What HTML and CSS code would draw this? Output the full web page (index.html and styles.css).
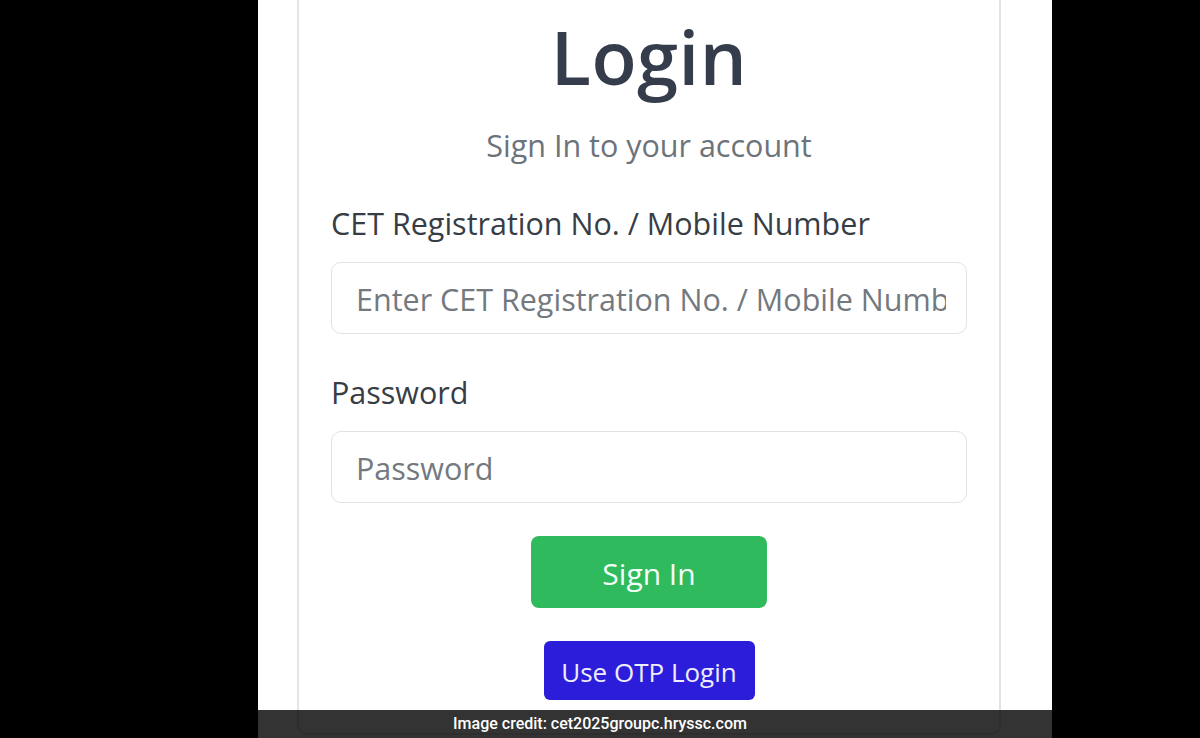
FILE: index.html
```html
<!DOCTYPE html>
<html lang="en">
<head>
<meta charset="utf-8">
<title>Login</title>
<link rel="stylesheet" href="styles.css">
</head>
<body>
<div class="screen">
  <div class="panel">
    <div class="card">
      <h1 class="title">Login</h1>
      <p class="subtitle">Sign In to your account</p>
      <label class="label label-first" for="reg">CET Registration No. / Mobile Number</label>
      <input class="field" id="reg" type="text" placeholder="Enter CET Registration No. / Mobile Number">
      <label class="label label-second" for="pwd">Password</label>
      <input class="field" id="pwd" type="password" placeholder="Password">
      <button class="btn btn-signin" type="button">Sign In</button>
      <button class="btn btn-otp" type="button">Use OTP Login</button>
    </div>
    <div class="credit">Image credit: cet2025groupc.hryssc.com</div>
  </div>
</div>
</body>
</html>
```

FILE: styles.css
```css
* { box-sizing: border-box; }
html, body { margin: 0; padding: 0; }
body {
  background: #000;
  font-family: "Open Sans", "Noto Sans", sans-serif;
  overflow: hidden;
}
.screen {
  display: flex;
  height: 738px;
}
.panel {
  position: relative;
  width: 794px;
  height: 738px;
  margin-left: 258px;
  background: #fff;
  padding-left: 39px;
  overflow: hidden;
}
.card {
  width: 704px;
  border: 2px solid #e4e4e4;
  border-top: 0;
  border-radius: 0 0 10px 10px;
  padding: 15px 32px 33px;
  display: flex;
  flex-direction: column;
}
.title {
  margin: 0;
  text-align: center;
  font-size: 74px;
  line-height: 84px;
  font-weight: 600;
  color: #353c4b;
  letter-spacing: 0.5px;
}
.subtitle {
  margin: 26px 0 0;
  text-align: center;
  font-size: 30.5px;
  line-height: 40px;
  color: #6c737b;
}
.label {
  font-size: 30.5px;
  line-height: 36px;
  color: #373d45;
}
.label-first { margin-top: 40px; }
.label-second { margin-top: 40px; }
.field {
  margin-top: 21px;
  width: 100%;
  height: 72px;
  border: 1.5px solid #dfe2e6;
  border-radius: 10px;
  padding: 2px 20px 0 24px;
  font-family: inherit;
  font-size: 30.5px;
  color: #333;
  background: #fff;
  outline: none;
}
.field::placeholder { color: #73797f; opacity: 1; }
.btn {
  align-self: center;
  border: 0;
  font-family: inherit;
  cursor: pointer;
}
.btn-signin {
  margin-top: 33px;
  width: 236px;
  height: 72px;
  border-radius: 8px;
  background: #2fba5d;
  color: #f4fff7;
  font-size: 30px;
  padding-top: 4px;
}
.btn-otp {
  margin-top: 33px;
  width: 211px;
  height: 59px;
  border-radius: 6px;
  background: #2b1dd9;
  color: #eeecff;
  font-size: 26px;
  padding-top: 3px;
}
.credit {
  position: absolute;
  left: 0;
  right: 0;
  bottom: 0;
  height: 28px;
  background: rgba(0, 0, 0, 0.8);
  color: #fff;
  font-family: Roboto, "Liberation Sans", sans-serif;
  font-weight: 500;
  font-size: 16px;
  line-height: 28px;
  text-align: center;
  padding-right: 110px;
}
```
